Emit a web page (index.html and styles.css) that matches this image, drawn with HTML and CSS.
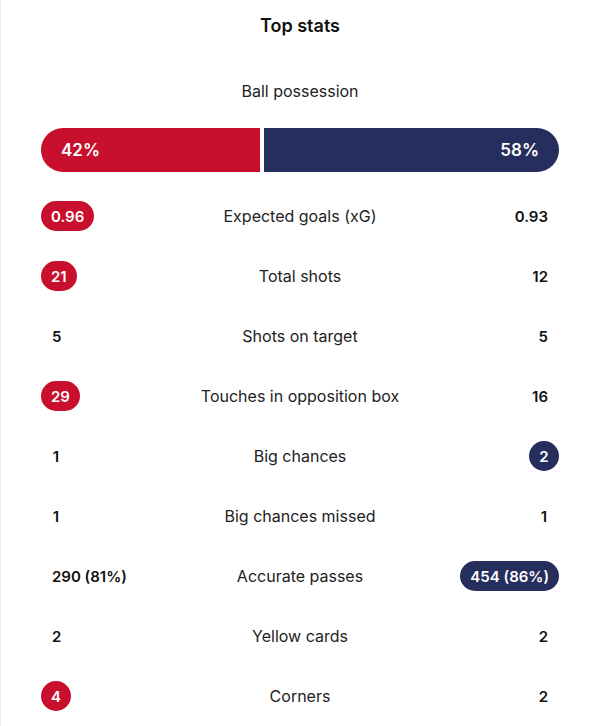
FILE: index.html
```html
<!DOCTYPE html>
<html lang="en">
<head>
<meta charset="utf-8">
<title>Top stats</title>
<link rel="stylesheet" href="styles.css">
</head>
<body>
<div class="card">
  <h2 class="title">Top stats</h2>
  <div class="poss-label">Ball possession</div>
  <div class="poss-bar">
    <div class="poss home" style="flex: 42">42%</div>
    <div class="poss away" style="flex: 58">58%</div>
  </div>
  <div class="rows">
    <div class="row"><div class="val left"><span class="pill home-pill">0.96</span></div><div class="label">Expected goals (xG)</div><div class="val right"><span class="pill">0.93</span></div></div>
    <div class="row"><div class="val left"><span class="pill home-pill">21</span></div><div class="label">Total shots</div><div class="val right"><span class="pill">12</span></div></div>
    <div class="row"><div class="val left"><span class="pill">5</span></div><div class="label">Shots on target</div><div class="val right"><span class="pill">5</span></div></div>
    <div class="row"><div class="val left"><span class="pill home-pill">29</span></div><div class="label">Touches in opposition box</div><div class="val right"><span class="pill">16</span></div></div>
    <div class="row"><div class="val left"><span class="pill">1</span></div><div class="label">Big chances</div><div class="val right"><span class="pill away-pill">2</span></div></div>
    <div class="row"><div class="val left"><span class="pill">1</span></div><div class="label">Big chances missed</div><div class="val right"><span class="pill">1</span></div></div>
    <div class="row"><div class="val left"><span class="pill">290 (81%)</span></div><div class="label">Accurate passes</div><div class="val right"><span class="pill away-pill">454 (86%)</span></div></div>
    <div class="row"><div class="val left"><span class="pill">2</span></div><div class="label">Yellow cards</div><div class="val right"><span class="pill">2</span></div></div>
    <div class="row"><div class="val left"><span class="pill home-pill">4</span></div><div class="label">Corners</div><div class="val right"><span class="pill">2</span></div></div>
  </div>
</div>
</body>
</html>
```

FILE: styles.css
```css
* { box-sizing: border-box; }
html, body { margin: 0; padding: 0; background: #ffffff; }
body {
  font-family: Inter, "Noto Sans", sans-serif;
  color: #1d1d1d;
}
.card {
  width: 598px;
  height: 726px;
  padding: 0 39px 0 40px;
  border-left: 1px solid #ececec;
  overflow: hidden;
}
.title {
  margin: 0;
  height: 50px;
  display: flex;
  align-items: center;
  justify-content: center;
  font-size: 18px;
  font-weight: 600;
  color: #111;
}
.poss-label {
  margin-top: 29px;
  height: 24px;
  line-height: 24px;
  text-align: center;
  font-size: 16px;
  color: #222;
}
.poss-bar {
  margin-top: 25px;
  height: 44px;
  display: flex;
  gap: 4px;
}
.poss {
  display: flex;
  align-items: center;
  color: #fff;
  font-size: 17px;
  font-weight: 600;
}
.poss.home {
  background: #c8102e;
  border-radius: 22px 0 0 22px;
  padding-left: 20px;
}
.poss.away {
  background: #262e5e;
  border-radius: 0 22px 22px 0;
  justify-content: flex-end;
  padding-right: 20px;
}
.rows {
  margin-top: 14px;
}
.row {
  height: 60px;
  display: grid;
  grid-template-columns: 1fr auto 1fr;
  align-items: center;
}
.label {
  text-align: center;
  font-size: 16px;
  color: #222;
  padding-bottom: 1px;
}
.val { display: flex; }
.val.right { justify-content: flex-end; }
.pill {
  display: inline-flex;
  align-items: center;
  justify-content: center;
  height: 30px;
  min-width: 30px;
  padding: 0 11px;
  border-radius: 15px;
  font-size: 15px;
  font-weight: 600;
  color: #111;
}
.home-pill { background: #c8102e; color: #fff; padding: 0 10px; }
.away-pill { background: #262e5e; color: #fff; padding: 0 10px; }
```
